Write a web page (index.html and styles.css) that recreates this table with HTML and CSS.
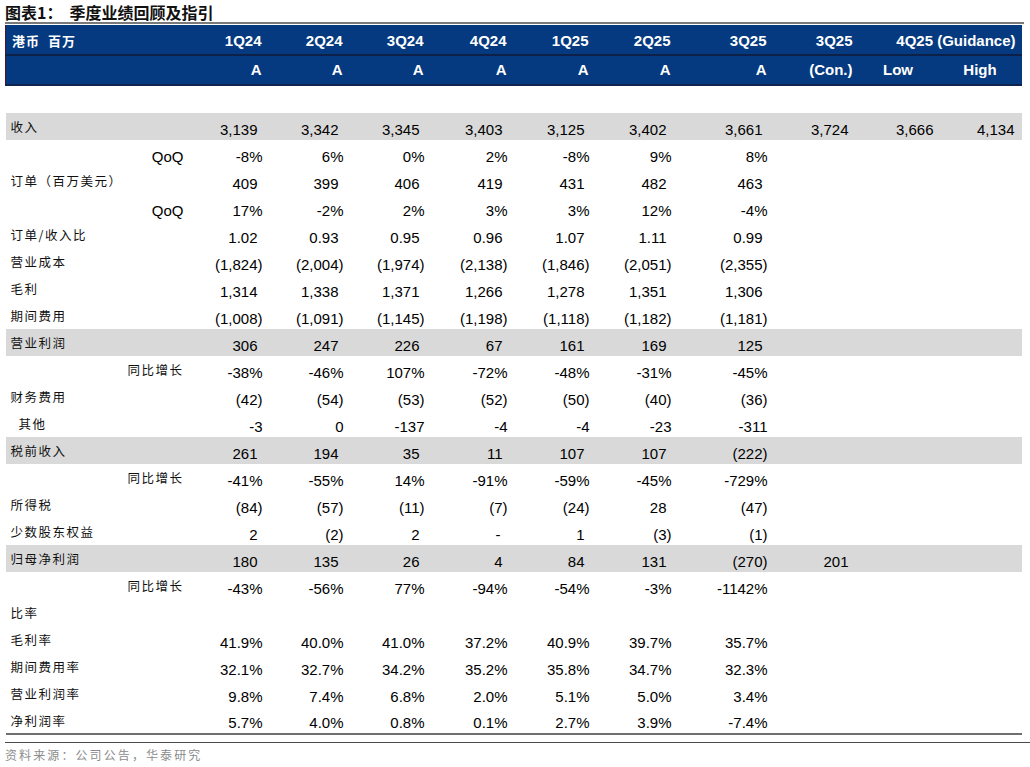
FILE: index.html
```html
<!DOCTYPE html>
<html lang="zh">
<head>
<meta charset="utf-8">
<title>季度业绩回顾及指引</title>
<link rel="stylesheet" href="styles.css">
</head>
<body>
<div class="page">
  <div class="title"><span class="fig">图表1：</span><span class="title-text">季度业绩回顾及指引</span></div>
  <table class="tbl">
    <colgroup>
      <col class="c-label"><col class="c-sub">
      <col class="c-1"><col class="c-2"><col class="c-3"><col class="c-4"><col class="c-5"><col class="c-6"><col class="c-7"><col class="c-8"><col class="c-9"><col class="c-10">
    </colgroup>
    <thead>
      <tr class="h1">
        <th class="hl" colspan="2">港币&nbsp;&nbsp;百万</th>
        <th>1Q24</th><th>2Q24</th><th>3Q24</th><th>4Q24</th><th>1Q25</th><th>2Q25</th><th>3Q25</th><th>3Q25</th>
        <th class="guide" colspan="2">4Q25 (Guidance)</th>
      </tr>
      <tr class="h2">
        <th class="hl" colspan="2"></th>
        <th>A</th><th>A</th><th>A</th><th>A</th><th>A</th><th>A</th><th>A</th><th>(Con.)</th>
        <th class="ctr">Low</th><th class="ctr high">High</th>
      </tr>
    </thead>
    <tbody>
      <tr class="blank"><td colspan="12"></td></tr>
      <tr class="band">
        <td class="lab">收入</td><td></td>
        <td class="n">3,139</td><td class="n">3,342</td><td class="n">3,345</td><td class="n">3,403</td><td class="n">3,125</td><td class="n">3,402</td><td class="n">3,661</td><td class="n">3,724</td><td class="n">3,666</td><td class="n">4,134</td>
      </tr>
      <tr>
        <td></td><td class="sub">QoQ</td>
        <td class="p">-8%</td><td class="p">6%</td><td class="p">0%</td><td class="p">2%</td><td class="p">-8%</td><td class="p">9%</td><td class="p">8%</td><td></td><td></td><td></td>
      </tr>
      <tr>
        <td class="lab">订单（百万美元）</td><td></td>
        <td class="n">409</td><td class="n">399</td><td class="n">406</td><td class="n">419</td><td class="n">431</td><td class="n">482</td><td class="n">463</td><td></td><td></td><td></td>
      </tr>
      <tr>
        <td></td><td class="sub">QoQ</td>
        <td class="p">17%</td><td class="p">-2%</td><td class="p">2%</td><td class="p">3%</td><td class="p">3%</td><td class="p">12%</td><td class="p">-4%</td><td></td><td></td><td></td>
      </tr>
      <tr>
        <td class="lab">订单/收入比</td><td></td>
        <td class="n">1.02</td><td class="n">0.93</td><td class="n">0.95</td><td class="n">0.96</td><td class="n">1.07</td><td class="n">1.11</td><td class="n">0.99</td><td></td><td></td><td></td>
      </tr>
      <tr>
        <td class="lab">营业成本</td><td></td>
        <td class="p">(1,824)</td><td class="p">(2,004)</td><td class="p">(1,974)</td><td class="p">(2,138)</td><td class="p">(1,846)</td><td class="p">(2,051)</td><td class="p">(2,355)</td><td></td><td></td><td></td>
      </tr>
      <tr>
        <td class="lab">毛利</td><td></td>
        <td class="n">1,314</td><td class="n">1,338</td><td class="n">1,371</td><td class="n">1,266</td><td class="n">1,278</td><td class="n">1,351</td><td class="n">1,306</td><td></td><td></td><td></td>
      </tr>
      <tr>
        <td class="lab">期间费用</td><td></td>
        <td class="p">(1,008)</td><td class="p">(1,091)</td><td class="p">(1,145)</td><td class="p">(1,198)</td><td class="p">(1,118)</td><td class="p">(1,182)</td><td class="p">(1,181)</td><td></td><td></td><td></td>
      </tr>
      <tr class="band">
        <td class="lab">营业利润</td><td></td>
        <td class="n">306</td><td class="n">247</td><td class="n">226</td><td class="n">67</td><td class="n">161</td><td class="n">169</td><td class="n">125</td><td></td><td></td><td></td>
      </tr>
      <tr>
        <td></td><td class="sub cn">同比增长</td>
        <td class="p">-38%</td><td class="p">-46%</td><td class="p">107%</td><td class="p">-72%</td><td class="p">-48%</td><td class="p">-31%</td><td class="p">-45%</td><td></td><td></td><td></td>
      </tr>
      <tr>
        <td class="lab">财务费用</td><td></td>
        <td class="p">(42)</td><td class="p">(54)</td><td class="p">(53)</td><td class="p">(52)</td><td class="p">(50)</td><td class="p">(40)</td><td class="p">(36)</td><td></td><td></td><td></td>
      </tr>
      <tr>
        <td class="lab indent">其他</td><td></td>
        <td class="p">-3</td><td class="p">0</td><td class="p">-137</td><td class="p">-4</td><td class="p">-4</td><td class="p">-23</td><td class="p">-311</td><td></td><td></td><td></td>
      </tr>
      <tr class="band">
        <td class="lab">税前收入</td><td></td>
        <td class="n">261</td><td class="n">194</td><td class="n">35</td><td class="n">11</td><td class="n">107</td><td class="n">107</td><td class="p">(222)</td><td></td><td></td><td></td>
      </tr>
      <tr>
        <td></td><td class="sub cn">同比增长</td>
        <td class="p">-41%</td><td class="p">-55%</td><td class="p">14%</td><td class="p">-91%</td><td class="p">-59%</td><td class="p">-45%</td><td class="p">-729%</td><td></td><td></td><td></td>
      </tr>
      <tr>
        <td class="lab">所得税</td><td></td>
        <td class="p">(84)</td><td class="p">(57)</td><td class="p">(11)</td><td class="p">(7)</td><td class="p">(24)</td><td class="n">28</td><td class="p">(47)</td><td></td><td></td><td></td>
      </tr>
      <tr>
        <td class="lab">少数股东权益</td><td></td>
        <td class="n">2</td><td class="p">(2)</td><td class="n">2</td><td class="n dash">-</td><td class="n">1</td><td class="p">(3)</td><td class="p">(1)</td><td></td><td></td><td></td>
      </tr>
      <tr class="band">
        <td class="lab">归母净利润</td><td></td>
        <td class="n">180</td><td class="n">135</td><td class="n">26</td><td class="n">4</td><td class="n">84</td><td class="n">131</td><td class="p">(270)</td><td class="n">201</td><td></td><td></td>
      </tr>
      <tr>
        <td></td><td class="sub cn">同比增长</td>
        <td class="p">-43%</td><td class="p">-56%</td><td class="p">77%</td><td class="p">-94%</td><td class="p">-54%</td><td class="p">-3%</td><td class="p">-1142%</td><td></td><td></td><td></td>
      </tr>
      <tr>
        <td class="lab">比率</td><td></td>
        <td></td><td></td><td></td><td></td><td></td><td></td><td></td><td></td><td></td><td></td>
      </tr>
      <tr>
        <td class="lab">毛利率</td><td></td>
        <td class="p">41.9%</td><td class="p">40.0%</td><td class="p">41.0%</td><td class="p">37.2%</td><td class="p">40.9%</td><td class="p">39.7%</td><td class="p">35.7%</td><td></td><td></td><td></td>
      </tr>
      <tr>
        <td class="lab">期间费用率</td><td></td>
        <td class="p">32.1%</td><td class="p">32.7%</td><td class="p">34.2%</td><td class="p">35.2%</td><td class="p">35.8%</td><td class="p">34.7%</td><td class="p">32.3%</td><td></td><td></td><td></td>
      </tr>
      <tr>
        <td class="lab">营业利润率</td><td></td>
        <td class="p">9.8%</td><td class="p">7.4%</td><td class="p">6.8%</td><td class="p">2.0%</td><td class="p">5.1%</td><td class="p">5.0%</td><td class="p">3.4%</td><td></td><td></td><td></td>
      </tr>
      <tr class="last">
        <td class="lab">净利润率</td><td></td>
        <td class="p">5.7%</td><td class="p">4.0%</td><td class="p">0.8%</td><td class="p">0.1%</td><td class="p">2.7%</td><td class="p">3.9%</td><td class="p">-7.4%</td><td></td><td></td><td></td>
      </tr>
    </tbody>
  </table>
  <div class="rule2"></div>
  <div class="source">资料来源：公司公告，华泰研究</div>
</div>
</body>
</html>
```

FILE: styles.css
```css
html, body {
  margin: 0;
  padding: 0;
  background: #ffffff;
}

.page {
  width: 1030px;
  padding: 3px 0 0 5px;
  box-sizing: border-box;
  font-family: "Liberation Sans", Arial, "Noto Sans CJK SC", sans-serif;
  color: #000;
}

.title {
  font-family: "Noto Sans CJK SC", sans-serif;
  font-weight: 700;
  font-size: 16px;
  line-height: 19px;
  height: 19px;
  color: #111;
  border-bottom: 2px solid #7a7a7a;
  width: 1019px;
  display: flex;
  align-items: center;
}

.title .title-text {
  margin-left: 7px;
  letter-spacing: 0;
}

.tbl {
  margin-top: 1px;
  border-collapse: collapse;
  table-layout: fixed;
  width: 1016px;
}

.c-label { width: 115px; }
.c-sub { width: 65px; }
.c-1 { width: 79px; }
.c-2 { width: 81px; }
.c-3 { width: 81px; }
.c-4 { width: 83px; }
.c-5 { width: 82px; }
.c-6 { width: 82px; }
.c-7 { width: 96px; }
.c-8 { width: 86px; }
.c-9 { width: 85px; }
.c-10 { width: 81px; }

.tbl th {
  background: #053a80;
  color: #ffffff;
  font-weight: 700;
  font-size: 15px;
  line-height: 17px;
  text-align: right;
  padding: 0 3px 0 0;
  white-space: nowrap;
}

.tbl tr.h1 {
  height: 30px;
}

.tbl tr.h2 {
  height: 30px;
}

.tbl tr.h1 th {
  border-bottom: 2px solid #0d2148;
  padding-top: 1px;
}

.tbl tr.h2 th {
  border-bottom: 2px solid #10254e;
  padding-bottom: 1px;
}

.tbl th.hl {
  text-align: left;
  padding-left: 6px;
  font-family: "Noto Sans CJK SC", sans-serif;
  font-size: 13px;
  letter-spacing: 1px;
  border-left: 1px solid #5a1020;
}

.tbl th.guide {
  padding-right: 6px;
}

.tbl th.ctr {
  text-align: center;
  padding-right: 0;
}

.tbl th.high {
  padding-right: 2px;
}

.tbl tr {
  height: 27px;
}

.tbl tr.blank {
  height: 28px;
}

.tbl tr.blank td {
  padding: 0;
}

.tbl td {
  padding: 0 2px 0 0;
  font-size: 15px;
  text-align: right;
  vertical-align: middle;
  white-space: nowrap;
  line-height: 17px;
}

.tbl td.n,
.tbl td.p {
  vertical-align: bottom;
  padding-bottom: 2px;
}

.tbl td.n {
  padding-right: 7px;
}

.tbl td.dash {
  padding-right: 9px;
}

.tbl td.lab {
  text-align: left;
  padding-left: 5px;
  font-family: "Noto Sans CJK SC", sans-serif;
  font-size: 12.5px;
  letter-spacing: 1.5px;
  color: #111;
}

.tbl td.indent {
  padding-left: 13px;
}

.tbl td.sub {
  vertical-align: bottom;
  padding-bottom: 2px;
  padding-right: 2px;
}

.tbl td.sub.cn {
  vertical-align: middle;
  padding-bottom: 0;
  font-family: "Noto Sans CJK SC", sans-serif;
  font-size: 12.5px;
  letter-spacing: 1.5px;
  color: #111;
}

.tbl tr.band td {
  background: #d9d9d9;
}

.tbl tr.last td {
  border-bottom: 2px solid #6e6e6e;
}

.rule2 {
  width: 1025px;
  margin-top: 7px;
  border-top: 1px solid #4a4a4a;
}

.source {
  margin-top: 4px;
  font-family: "Noto Sans CJK SC", sans-serif;
  font-size: 12px;
  letter-spacing: 2.1px;
  color: #8c8c8c;
  line-height: 16px;
}
```
